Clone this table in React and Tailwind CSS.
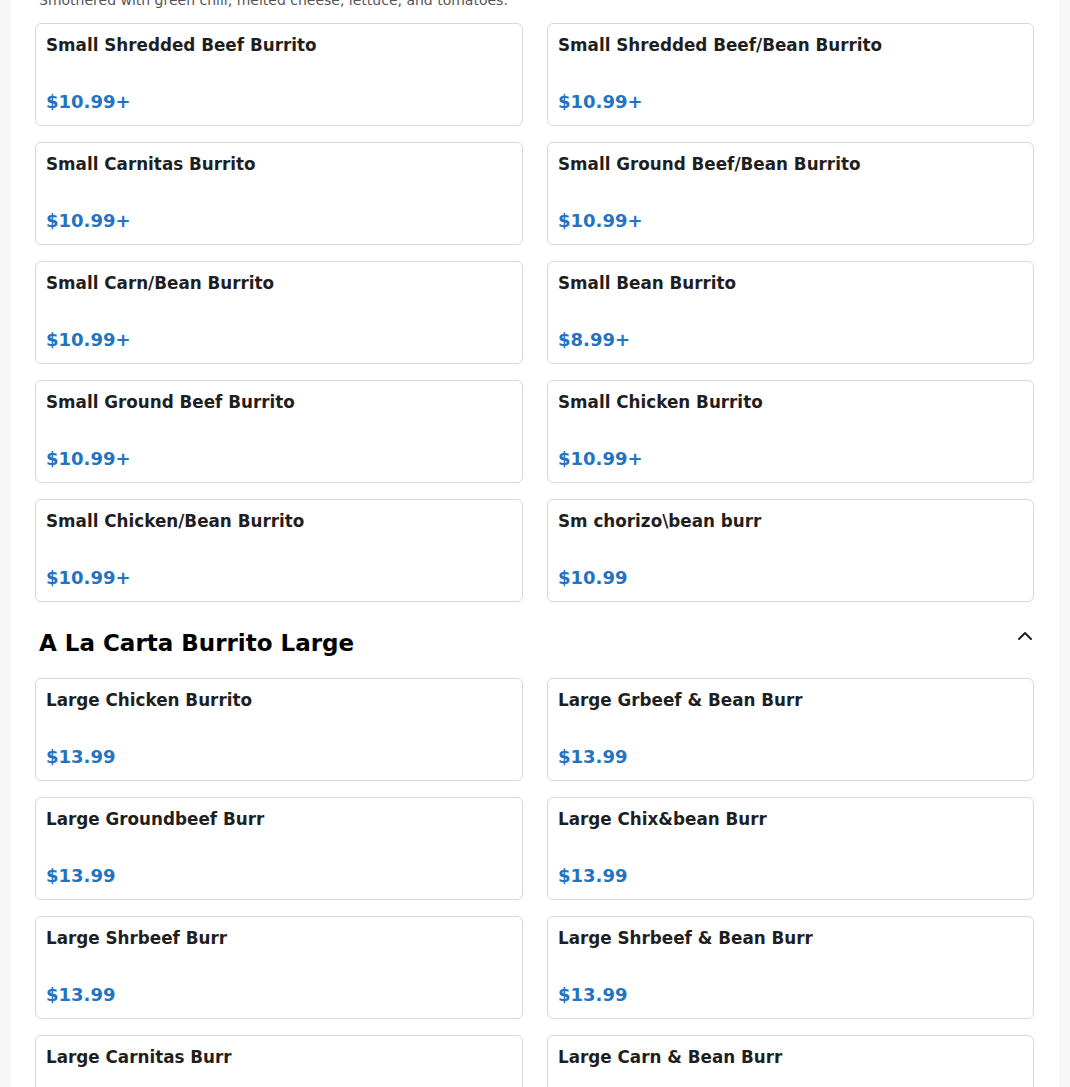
import { ChevronUp } from "lucide-react";

const small = [
  { name: "Small Shredded Beef Burrito", price: "$10.99+" },
  { name: "Small Shredded Beef/Bean Burrito", price: "$10.99+" },
  { name: "Small Carnitas Burrito", price: "$10.99+" },
  { name: "Small Ground Beef/Bean Burrito", price: "$10.99+" },
  { name: "Small Carn/Bean Burrito", price: "$10.99+" },
  { name: "Small Bean Burrito", price: "$8.99+" },
  { name: "Small Ground Beef Burrito", price: "$10.99+" },
  { name: "Small Chicken Burrito", price: "$10.99+" },
  { name: "Small Chicken/Bean Burrito", price: "$10.99+" },
  { name: "Sm chorizo\\bean burr", price: "$10.99" }
];

const large = [
  { name: "Large Chicken Burrito", price: "$13.99" },
  { name: "Large Grbeef & Bean Burr", price: "$13.99" },
  { name: "Large Groundbeef Burr", price: "$13.99" },
  { name: "Large Chix&bean Burr", price: "$13.99" },
  { name: "Large Shrbeef Burr", price: "$13.99" },
  { name: "Large Shrbeef & Bean Burr", price: "$13.99" },
  { name: "Large Carnitas Burr", price: "$13.99" },
  { name: "Large Carn & Bean Burr", price: "$13.99" }
];

function ItemCard({ name, price }) {
  return (
    <div className="flex h-[103px] flex-col justify-between rounded-md border border-[#d8d8d8] bg-white px-[10px] pt-[9px] pb-[11px]">
      <h4 className="text-[16.8px] font-bold leading-6 text-[#1f1f1f]">{name}</h4>
      <span className="text-lg font-bold leading-6 text-[#2373c2]">{price}</span>
    </div>
  );
}

export default function App() {
  return (
    <div className="min-h-screen bg-[#f7f7f7] px-[11px] font-['DejaVu_Sans',sans-serif]">
      <div className="-mt-[10px] bg-white pl-6 pr-[25px] pb-10">

        {/* small burritos */}
        <p className="px-1 text-sm leading-5 text-[#555]">
          Smothered with green chili, melted cheese, lettuce, and tomatoes.
        </p>
        <div className="mt-[13px] grid grid-cols-[488px_487px] gap-x-6 gap-y-4">
          {small.map((item) => (
            <ItemCard key={item.name} {...item} />
          ))}
        </div>

        {/* large section */}
        <div className="mt-[25px] mb-[19px] flex h-8 items-start justify-between pl-1">
          <h3 className="text-[23px] font-bold leading-8 text-black">A La Carta Burrito Large</h3>
          <ChevronUp className="-mt-[3px] -mr-[3px] h-6 w-6 text-[#222]" strokeWidth={2} />
        </div>
        <div className="grid grid-cols-[488px_487px] gap-x-6 gap-y-4">
          {large.map((item) => (
            <ItemCard key={item.name} {...item} />
          ))}
        </div>
      </div>
    </div>
  );
}
